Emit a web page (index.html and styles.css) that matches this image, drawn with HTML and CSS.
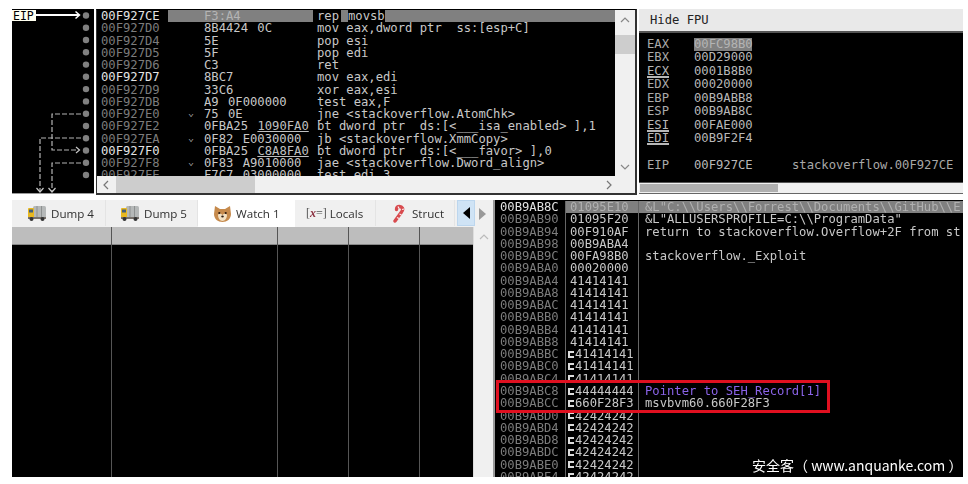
FILE: index.html
```html
<!DOCTYPE html>
<html lang="en">
<head>
<meta charset="utf-8">
<title>x64dbg</title>
<link rel="stylesheet" href="styles.css">
</head>
<body>
<div class="app">
  <div class="top">
    <div class="graph">
      <svg class="graph-svg" width="82" height="185" viewBox="12 9 82 185">
        <g fill="#808080">
          <circle cx="86" cy="15.5" r="3.2"/><circle cx="86" cy="27.8" r="3.2"/><circle cx="86" cy="40" r="3.2"/><circle cx="86" cy="52.3" r="3.2"/><circle cx="86" cy="64.6" r="3.2"/><circle cx="86" cy="76.8" r="3.2"/><circle cx="86" cy="89.1" r="3.2"/><circle cx="86" cy="101.4" r="3.2"/><circle cx="86" cy="113.7" r="3.2"/><circle cx="86" cy="126" r="3.2"/><circle cx="86" cy="138.2" r="3.2"/><circle cx="86" cy="150.5" r="3.2"/><circle cx="86" cy="162.8" r="3.2"/><circle cx="86" cy="175" r="3.2"/>
        </g>
        <rect x="12" y="10" width="24" height="11" fill="#fffff0"/>
        <text x="13" y="19.500" class="eip-label">EIP</text>
        <path d="M36 15H79" stroke="#fff" stroke-width="2"/>
        <path d="M75.500 11.500l4 3.500-4 3.500" fill="none" stroke="#fff" stroke-width="1.500"/>
        <g fill="none" stroke="#b4b4b4" stroke-width="1.200" stroke-dasharray="5 2">
          <path d="M81 114H52V150H78"/>
          <path d="M81 138H40V191"/>
          <path d="M81 163H52V191"/>
        </g>
        <g fill="none" stroke="#c8c8c8" stroke-width="1.200">
          <path d="M76 147l3.500 3-3.500 3"/>
          <path d="M36.500 188l3.500 4 3.500-4"/>
          <path d="M48.500 188l3.500 4 3.500-4"/>
        </g>
      </svg>
    </div>

    <div class="disasm">
      <div class="disasm-main">
        <div class="disasm-list mono">
          <div class="d-row"><span class="d-addr on">00F927CE</span><span class="d-mark sel"></span><span class="d-bytes sel">F3:A4</span><span class="d-code"><span>rep</span><i class="tick"></i><span>movsb</span><i class="d-fill"></i></span></div>
          <div class="d-row"><span class="d-addr">00F927D0</span><span class="d-mark"></span><span class="d-bytes">8B4424 0C</span><span class="d-code">mov eax,dword ptr  ss:[esp+C]</span></div>
          <div class="d-row"><span class="d-addr">00F927D4</span><span class="d-mark"></span><span class="d-bytes">5E</span><span class="d-code">pop esi</span></div>
          <div class="d-row"><span class="d-addr">00F927D5</span><span class="d-mark"></span><span class="d-bytes">5F</span><span class="d-code">pop edi</span></div>
          <div class="d-row"><span class="d-addr">00F927D6</span><span class="d-mark"></span><span class="d-bytes">C3</span><span class="d-code">ret</span></div>
          <div class="d-row"><span class="d-addr on">00F927D7</span><span class="d-mark"></span><span class="d-bytes">8BC7</span><span class="d-code">mov eax,edi</span></div>
          <div class="d-row"><span class="d-addr">00F927D9</span><span class="d-mark"></span><span class="d-bytes">33C6</span><span class="d-code">xor eax,esi</span></div>
          <div class="d-row"><span class="d-addr">00F927DB</span><span class="d-mark"></span><span class="d-bytes">A9 0F000000</span><span class="d-code">test eax,F</span></div>
          <div class="d-row"><span class="d-addr">00F927E0</span><span class="d-mark">⌄</span><span class="d-bytes">75 0E</span><span class="d-code">jne &lt;stackoverflow.AtomChk&gt;</span></div>
          <div class="d-row"><span class="d-addr">00F927E2</span><span class="d-mark"></span><span class="d-bytes">0FBA25 <u>1090FA0</u></span><span class="d-code">bt dword ptr  ds:[&lt;___isa_enabled&gt; ],1</span></div>
          <div class="d-row"><span class="d-addr">00F927EA</span><span class="d-mark">⌄</span><span class="d-bytes">0F82 E0030000</span><span class="d-code">jb &lt;stackoverflow.XmmCopy&gt;</span></div>
          <div class="d-row"><span class="d-addr on">00F927F0</span><span class="d-mark"></span><span class="d-bytes">0FBA25 <u>C8A8FA0</u></span><span class="d-code">bt dword ptr  ds:[&lt;___favor&gt; ],0</span></div>
          <div class="d-row"><span class="d-addr">00F927F8</span><span class="d-mark">⌄</span><span class="d-bytes">0F83 A9010000</span><span class="d-code">jae &lt;stackoverflow.Dword_align&gt;</span></div>
          <div class="d-row"><span class="d-addr">00F927FE</span><span class="d-mark"></span><span class="d-bytes">F7C7 03000000</span><span class="d-code">test edi,3</span></div>
        </div>
        <div class="vbar">
          <svg class="chev" width="10" height="6" viewBox="0 0 10 6"><path d="M1 5l4-4 4 4" fill="none" stroke="#888" stroke-width="1.200"/></svg>
          <div class="vthumb"></div>
          <svg class="chev chev-end" width="10" height="6" viewBox="0 0 10 6"><path d="M1 1l4 4 4-4" fill="none" stroke="#888" stroke-width="1.200"/></svg>
        </div>
      </div>
      <div class="hbar">
        <svg width="8" height="10" viewBox="0 0 8 10"><path d="M6 1L2 5l4 4" fill="none" stroke="#777" stroke-width="1.200"/></svg>
        <div class="hthumb"></div>
        <svg class="hbar-end" width="8" height="10" viewBox="0 0 8 10"><path d="M2 1l4 4-4 4" fill="none" stroke="#777" stroke-width="1.200"/></svg>
      </div>
    </div>

    <div class="regs">
      <div class="regs-head mono">Hide FPU</div>
      <div class="regs-body mono">
        <div class="r-row"><span class="r-name">EAX</span><span class="r-val sel">00FC98B0</span></div>
        <div class="r-row"><span class="r-name">EBX</span><span class="r-val">00D29000</span></div>
        <div class="r-row"><span class="r-name"><u>ECX</u></span><span class="r-val">0001B8B0</span></div>
        <div class="r-row"><span class="r-name">EDX</span><span class="r-val">00020000</span></div>
        <div class="r-row"><span class="r-name">EBP</span><span class="r-val">00B9ABB8</span></div>
        <div class="r-row"><span class="r-name">ESP</span><span class="r-val">00B9AB8C</span></div>
        <div class="r-row"><span class="r-name"><u>ESI</u></span><span class="r-val">00FAE000</span></div>
        <div class="r-row"><span class="r-name"><u>EDI</u></span><span class="r-val">00B9F2F4</span></div>
        <div class="r-row r-gap"><span class="r-name">EIP</span><span class="r-val">00F927CE</span><span class="r-note">stackoverflow.00F927CE</span></div>
      </div>
      <div class="regs-bar"><div class="regs-thumb"></div></div>
    </div>
  </div>

  <div class="bottom">
    <div class="watch">
      <div class="tabs">
        <div class="tab t-dump4">
          <svg class="truck" width="20" height="18" viewBox="0 0 20 18"><rect x="6" y="2" width="13" height="12" rx="1.500" fill="#b5b8b8"/><path d="M10 2v12M14.500 2v12" stroke="#8d9090"/><rect x="1" y="4" width="6" height="10" rx="1" fill="#e8b820"/><rect x="2" y="5.500" width="4" height="3" fill="#45607a"/><rect x="1" y="13" width="18" height="2" fill="#77706a"/><circle cx="4.500" cy="15" r="2" fill="#333"/><circle cx="15.500" cy="15" r="2" fill="#333"/></svg>
          <span>Dump 4</span>
        </div>
        <div class="tab t-dump5">
          <svg class="truck" width="20" height="18" viewBox="0 0 20 18"><rect x="6" y="2" width="13" height="12" rx="1.500" fill="#b5b8b8"/><path d="M10 2v12M14.500 2v12" stroke="#8d9090"/><rect x="1" y="4" width="6" height="10" rx="1" fill="#e8b820"/><rect x="2" y="5.500" width="4" height="3" fill="#45607a"/><rect x="1" y="13" width="18" height="2" fill="#77706a"/><circle cx="4.500" cy="15" r="2" fill="#333"/><circle cx="15.500" cy="15" r="2" fill="#333"/></svg>
          <span>Dump 5</span>
        </div>
        <div class="tab tab-on t-watch">
          <svg width="19" height="18" viewBox="0 0 19 18"><path d="M2 1l5 3h5l5-3 1 8c0 5-4 8-8.500 8S1 14 1 9z" fill="#c68a4c"/><path d="M5 10c1-2 3-2 4.500 0 1.500-2 3.500-2 4.500 0 0 3-2 6-4.500 6S5 13 5 10z" fill="#f3e0c2"/><circle cx="6.300" cy="8" r="1.100" fill="#2a1a10"/><circle cx="12.700" cy="8" r="1.100" fill="#2a1a10"/><ellipse cx="9.500" cy="11.500" rx="1.300" ry="1" fill="#2a1a10"/></svg>
          <span>Watch 1</span>
        </div>
        <div class="tab t-locals">
          <span class="x-icon">[<em>x</em>=]</span>
          <span>Locals</span>
        </div>
        <div class="tab t-struct">
          <svg width="15" height="19" viewBox="0 0 15 19"><path d="M3 17L9.500 8C12 5 10 2.500 7.500 2.500 5.500 2.500 4.500 4 4.500 5.500" fill="none" stroke="#d84a4e" stroke-width="3.400" stroke-linecap="round"/><path d="M5 13.500l2 1M7.500 10l2 1M10 5.500l2-.5M6 2.500l1 2" stroke="#fbeaea" stroke-width="1.200"/></svg>
          <span>Struct</span>
        </div>
        <div class="tab-arrows">
          <div class="arrow-btn"><i class="tri-l"></i></div>
          <div class="arrow-next"><i class="tri-r"></i></div>
        </div>
      </div>
      <div class="w-table">
        <div class="w-grid">
          <div class="w-col w-c1"><div class="w-head"></div></div>
          <div class="w-col w-c2"><div class="w-head"></div></div>
          <div class="w-col w-c3"><div class="w-head"></div></div>
          <div class="w-col w-c4"><div class="w-head"></div></div>
          <div class="w-col w-c5"><div class="w-head"></div></div>
        </div>
        <div class="w-bar"><svg width="10" height="6" viewBox="0 0 10 6"><path d="M1 5l4-4 4 4" fill="none" stroke="#bbb" stroke-width="1.200"/></svg></div>
      </div>
    </div>

    <div class="stack mono">
      <div class="s-row s-sel"><span class="s-addr on">00B9AB8C</span><span class="s-val">01095E10</span><span class="s-note">&amp;L"C:\\Users\\Forrest\\Documents\\GitHub\\E</span></div>
      <div class="s-row"><span class="s-addr">00B9AB90</span><span class="s-val">01095F20</span><span class="s-note">&amp;L"ALLUSERSPROFILE=C:\\ProgramData"</span></div>
      <div class="s-row"><span class="s-addr">00B9AB94</span><span class="s-val">00F910AF</span><span class="s-note">return to stackoverflow.Overflow+2F from st</span></div>
      <div class="s-row"><span class="s-addr">00B9AB98</span><span class="s-val">00B9ABA4</span><span class="s-note"></span></div>
      <div class="s-row"><span class="s-addr">00B9AB9C</span><span class="s-val">00FA98B0</span><span class="s-note">stackoverflow._Exploit</span></div>
      <div class="s-row"><span class="s-addr">00B9ABA0</span><span class="s-val">00020000</span><span class="s-note"></span></div>
      <div class="s-row"><span class="s-addr">00B9ABA4</span><span class="s-val">41414141</span><span class="s-note"></span></div>
      <div class="s-row"><span class="s-addr">00B9ABA8</span><span class="s-val">41414141</span><span class="s-note"></span></div>
      <div class="s-row"><span class="s-addr">00B9ABAC</span><span class="s-val">41414141</span><span class="s-note"></span></div>
      <div class="s-row"><span class="s-addr">00B9ABB0</span><span class="s-val">41414141</span><span class="s-note"></span></div>
      <div class="s-row"><span class="s-addr">00B9ABB4</span><span class="s-val">41414141</span><span class="s-note"></span></div>
      <div class="s-row"><span class="s-addr">00B9ABB8</span><span class="s-val">41414141</span><span class="s-note"></span></div>
      <div class="s-row"><span class="s-addr">00B9ABBC</span><span class="s-val"><i class="seh"></i>41414141</span><span class="s-note"></span></div>
      <div class="s-row"><span class="s-addr">00B9ABC0</span><span class="s-val"><i class="seh"></i>41414141</span><span class="s-note"></span></div>
      <div class="s-row"><span class="s-addr">00B9ABC4</span><span class="s-val"><i class="seh"></i>41414141</span><span class="s-note"></span></div>
      <div class="s-row"><span class="s-addr">00B9ABC8</span><span class="s-val"><i class="seh"></i>44444444</span><span class="s-note s-purple">Pointer to SEH_Record[1]</span></div>
      <div class="s-row"><span class="s-addr">00B9ABCC</span><span class="s-val"><i class="seh"></i>660F28F3</span><span class="s-note">msvbvm60.660F28F3</span></div>
      <div class="s-row"><span class="s-addr">00B9ABD0</span><span class="s-val"><i class="seh"></i>42424242</span><span class="s-note"></span></div>
      <div class="s-row"><span class="s-addr">00B9ABD4</span><span class="s-val"><i class="seh"></i>42424242</span><span class="s-note"></span></div>
      <div class="s-row"><span class="s-addr">00B9ABD8</span><span class="s-val"><i class="seh"></i>42424242</span><span class="s-note"></span></div>
      <div class="s-row"><span class="s-addr">00B9ABDC</span><span class="s-val"><i class="seh"></i>42424242</span><span class="s-note"></span></div>
      <div class="s-row"><span class="s-addr">00B9ABE0</span><span class="s-val"><i class="seh"></i>42424242</span><span class="s-note"></span></div>
      <div class="s-row"><span class="s-addr">00B9ABE4</span><span class="s-val"><i class="seh"></i>42424242</span><span class="s-note"></span></div>
      <div class="red-box"></div>
      <div class="mark-text">安全客（ www.anquanke.com ）</div>
    </div>
  </div>
</div>
</body>
</html>
```
FILE: styles.css
```css
* { box-sizing: border-box; }
html, body { margin: 0; padding: 0; background: #fff; }
body { width: 968px; height: 484px; overflow: hidden; }
.mono { font-family: "DejaVu Sans Mono", monospace; font-size: 12.2px; line-height: 12.27px; }
.d-row span, .r-row span, .s-row span, .regs-head { white-space: pre; }
.on { color: #e4e4e4 !important; }
.sel { background: #808080; color: #b4b4b4; }
u { text-decoration-thickness: 1px; text-underline-offset: 1px; }

.app { padding: 9px 5px 0 12px; display: flex; flex-direction: column; gap: 5px; filter: blur(.35px); }
.top { display: flex; gap: 2px; height: 186px; }

.graph { width: 82px; height: 185px; background: #000; border-bottom: 1px solid #999; flex: none; }
.graph-svg { display: block; }
.eip-label { font: 11.500px "DejaVu Sans Mono", monospace; fill: #000; }

.disasm { width: 541px; flex: none; display: flex; flex-direction: column; border: 1px solid #333; border-width: 1px 2px 2px 1px; border-top-color: #000; background: #f0f0f0; }
.disasm-main { display: flex; height: 166px; }
.disasm-list { flex: 1; min-width: 0; background: #000; overflow: hidden; color: #c8c8c8; }
.d-row { display: grid; grid-template-columns: 71px 36px 109px 1fr; height: 12.27px; }
.d-row > span { overflow-x: clip; height: 12.27px; }
.d-addr { padding-left: 4px; color: #7c7c7c; }
.d-mark { color: #aaa; padding-left: 20px; font-size: 10px; line-height: 9px; }
.d-bytes { word-spacing: 2px; }
.d-bytes u { color: #c0c0c0; }
.d-code { padding-left: 4px; display: flex; }
.tick { width: 7px; margin-left: 2px; background: #808080; flex: none; }
.d-fill { flex: 1; background: #808080; }

.vbar { width: 20px; flex: none; background: #f0f0f0; display: flex; flex-direction: column; align-items: center; padding: 7px 0 6px; }
.vthumb { width: 100%; height: 19px; margin-top: 12px; background: #cdcdcd; }
.chev { flex: none; }
.chev-end { margin-top: auto; }

.hbar { height: 17px; background: #f0f0f0; display: flex; align-items: center; padding: 0 5px; }
.hthumb { width: 139px; height: 100%; margin-left: 6px; background: #cdcdcd; }
.hbar-end { margin-left: auto; margin-right: 17px; }

.regs { width: 324px; flex: none; display: flex; flex-direction: column; }
.regs-head { height: 24px; background: #e9e9e9; border-bottom: 2px solid #555; color: #222; line-height: 22px; padding-left: 11px; }
.regs-body { height: 150px; background: #000; padding: 5px 0 0 8px; color: #b8b8b8; border-bottom: 1px solid #555; line-height: 13.45px; }
.r-row { display: flex; height: 13.45px; }
.r-gap { margin-top: 13.45px; }
.r-name { width: 47px; color: #aaa; }
.r-val { width: 98px; }
.r-val.sel { flex: none; width: 58px; margin-right: 40px; }
.r-note { color: #a8a8a8; }
.r-name u { text-decoration-thickness: 2px; text-underline-offset: 1px; color: #b8b8b8; }
.regs-bar { height: 11px; background: #f0f0f0; border-bottom: 1px solid #666; padding: 1px; }
.regs-thumb { width: 138px; height: 100%; background: #b0b0b0; }

.bottom { display: flex; height: 277px; }
.watch { width: 483px; flex: none; display: flex; flex-direction: column; border-right: 2px solid #999; }
.tabs { height: 27px; display: flex; font: 11.600px "Open Sans", sans-serif; color: #333; background: #f0f0f0; flex: none; }
.tab { display: flex; align-items: center; gap: 4px; height: 26px; background: #f0f0f0; border-right: 1px solid #e4e4e4; color: #303030; }
.t-dump4 { width: 94px; padding-left: 15px; }
.t-dump5 { width: 92px; padding-left: 14px; }
.t-watch { width: 97px; padding-left: 15px; }
.t-locals { width: 81px; padding-left: 11px; gap: 3px; }
.t-struct { width: 79px; padding-left: 16px; gap: 5px; }
.tab-on { background: #fff; height: 27px; border-right: 0; }
.x-icon { font: 12px "Liberation Serif", serif; color: #555; }
.x-icon em { color: #8a3040; font-weight: bold; }
.tab-arrows { display: flex; flex: 1; align-items: stretch; }
.arrow-btn { width: 18px; height: 26px; margin-left: 2px; background: #cfe3f5; border: 1px solid #bcd6ee; display: flex; align-items: center; justify-content: center; }
.arrow-next { width: 14px; display: flex; align-items: center; justify-content: center; }
.tri-l { width: 0; height: 0; border: 6px solid transparent; border-left: 0; border-right: 7px solid #000; }
.tri-r { width: 0; height: 0; border: 6px solid transparent; border-right: 0; border-left: 7px solid #999; }

.w-table { flex: 1; min-height: 0; display: flex; background: #000; }
.w-grid { flex: 1; display: grid; grid-template-columns: 100px 166px 71px 71px 1fr; min-width: 0; }
.w-col { border-right: 1px solid #555; }
.w-c5 { border-right: 0; }
.w-head { height: 18px; background: #bdbdbd; border-bottom: 1px solid #888; box-shadow: 1px 0 0 #555; }
.w-bar { width: 20px; flex: none; background: #f0f0f0; display: flex; justify-content: center; padding-top: 7px; border-left: 1px solid #ddd; }

.stack { position: relative; width: 468px; flex: none; background: #000; overflow: hidden; padding-top: 1px; color: #c8c8c8; }
.s-row { display: grid; grid-template-columns: 71px 73px 1fr; height: 12.27px; }
.s-addr { padding-left: 5px; color: #7c7c7c; border-right: 1px solid #666; }
.s-val { padding-left: 4px; border-right: 1px solid #666; display: flex; align-items: center; }
.s-note { padding-left: 6px; overflow-x: clip; }
.s-sel .s-val, .s-sel .s-note { background: #808080; color: #b0b0b0; }
.s-purple { color: #8a63e8; }
.seh { width: 6px; height: 7px; margin-right: 1px; margin-left: -2px; border: 2px solid #ddd; border-right: 0; flex: none; }
.red-box { position: absolute; left: 1px; top: 180px; width: 334px; height: 33px; border: 3px solid #e01020; }
.mark-text { position: absolute; left: 257px; top: 256px; font: 14px/18px "Noto Sans CJK SC", "Noto Sans", sans-serif; color: #fff; white-space: nowrap; }
```
